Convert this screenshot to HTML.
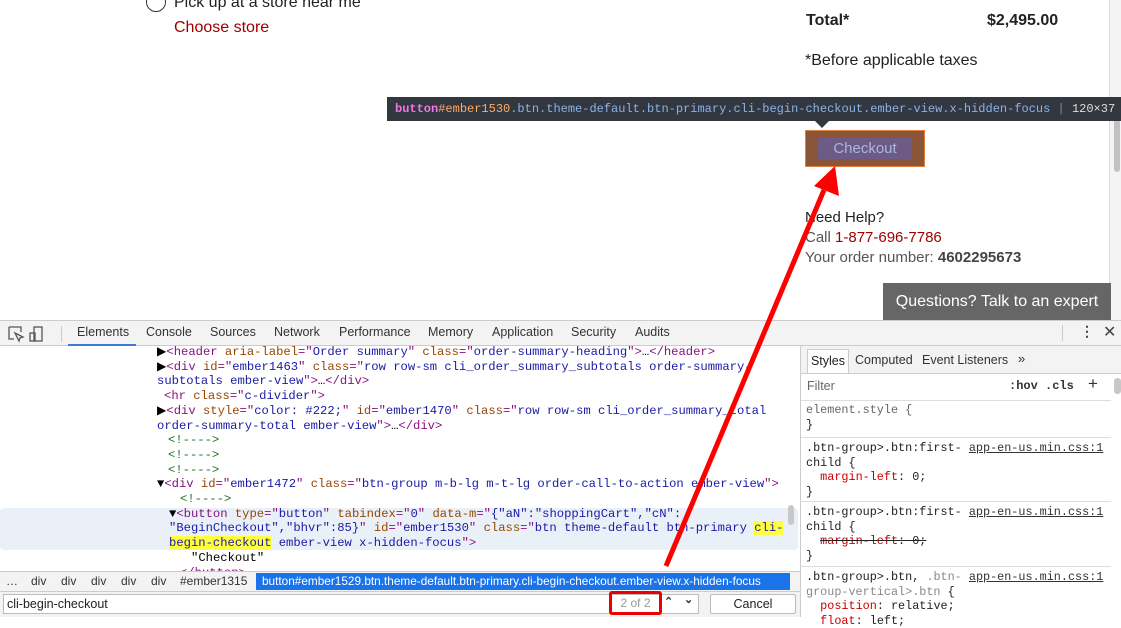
<!DOCTYPE html>
<html><head><meta charset="utf-8"><style>
*{margin:0;padding:0;box-sizing:border-box}
body{width:1121px;height:617px;overflow:hidden;position:relative;background:#fff;font-family:"Liberation Sans",sans-serif}
.a{position:absolute;white-space:nowrap}
.m{font-family:"Liberation Mono",monospace;font-size:12.2px}
.tg{color:#881280}.at{color:#994500}.av{color:#1a1aa6}.cm{color:#236e25}
.sp{font-family:"Liberation Mono",monospace;font-size:11.8px;line-height:14.6px;color:#222}
</style></head><body>
<!-- page -->
<div class="a" style="left:146px;top:-8px;width:20px;height:20px;border:1.5px solid #333;border-radius:50%"></div>
<div class="a" style="left:174px;top:-6px;font-size:16px;color:#222">Pick up at a store near me</div>
<div class="a" style="left:174px;top:19px;font-size:16px;color:#a00000">Choose store</div>
<div class="a" style="left:806px;top:12px;font-size:16px;font-weight:bold;color:#222">Total*</div>
<div class="a" style="left:987px;top:12px;font-size:16px;font-weight:bold;color:#222">$2,495.00</div>
<div class="a" style="left:805px;top:52px;font-size:16px;color:#222">*Before applicable taxes</div>
<div class="a" style="left:1109px;top:0;width:12px;height:320px;background:#f4f4f4;border-left:1px solid #ddd"></div>
<div class="a" style="left:1114px;top:118px;width:6px;height:54px;background:#c1c1c1;border-radius:3px"></div>
<!-- tooltip -->
<div class="a m" style="left:387px;top:97px;width:734px;height:24px;overflow:hidden;background:#333740;color:#8ab4e8;line-height:24px;padding-left:8px;font-size:12px"><span style="color:#ee78e6;font-weight:bold">button</span><span style="color:#ffab66">#ember1530</span>.btn.theme-default.btn-primary.cli-begin-checkout.ember-view.x-hidden-focus <span style="color:#888">|</span> <span style="color:#ddd">120×37</span></div>
<div class="a" style="left:815px;top:121px;width:0;height:0;border-left:7px solid transparent;border-right:7px solid transparent;border-top:7px solid #333740"></div>
<div class="a" style="left:805px;top:130px;width:120px;height:37px;background:#8b5537;border:1px solid #e08040"></div>
<div class="a" style="left:818px;top:138px;width:94px;height:21px;background:#6d5a85;color:#a8b8e0;font-size:15px;text-align:center;line-height:21px">Checkout</div>
<div class="a" style="left:805px;top:209px;font-size:15px;color:#222">Need Help?</div>
<div class="a" style="left:805px;top:229px;font-size:15px;color:#555">Call <span style="color:#a00000">1-877-696-7786</span></div>
<div class="a" style="left:805px;top:249px;font-size:15px;color:#555">Your order number: <b style="color:#444">4602295673</b></div>
<div class="a" style="left:883px;top:283px;width:228px;height:37px;background:#666;color:#fff;font-size:16px;line-height:37px;text-align:center">Questions? Talk to an expert</div>
<!-- devtools -->
<div class="a" style="left:0;top:320px;width:1121px;height:26px;background:#f3f3f3;border-top:1px solid #ccc;border-bottom:1px solid #ccc"></div>
<svg class="a" style="left:7px;top:325px" width="44" height="18"><path d="M2 2h12v5M2 2v12h5M8 8l8 4-3 1-1 3z" fill="none" stroke="#555" stroke-width="1.3"/><rect x="27" y="2" width="8" height="14" fill="none" stroke="#555" stroke-width="1.3"/><rect x="23" y="8" width="5" height="8" fill="none" stroke="#555" stroke-width="1.3"/></svg>
<div class="a" style="left:61px;top:326px;width:1px;height:16px;background:#ccc"></div>
<div class="a" style="top:325px;left:0;font-size:12.5px;color:#333;width:700px">
<span class="a" style="left:77px">Elements</span><span class="a" style="left:146px">Console</span><span class="a" style="left:210px">Sources</span><span class="a" style="left:274px">Network</span><span class="a" style="left:339px">Performance</span><span class="a" style="left:428px">Memory</span><span class="a" style="left:492px">Application</span><span class="a" style="left:571px">Security</span><span class="a" style="left:635px">Audits</span></div>
<div class="a" style="left:68px;top:344px;width:68px;height:2px;background:#3879d9"></div>
<div class="a" style="left:1062px;top:325px;width:1px;height:16px;background:#ccc"></div>
<div class="a" style="left:1080px;top:323px;font-size:14px;color:#444;font-weight:bold">⋮</div>
<div class="a" style="left:1103px;top:322px;font-size:16px;color:#444">✕</div>
<div class="a" style="left:0;top:508px;width:798px;height:42px;background:#eaf0f8;border-radius:4px"></div>
<div class="a m" style="left:0;top:345px;width:800px;line-height:14.7px">
<div class="a" style="left:157px;top:0">▶<span class="tg">&lt;header</span> <span class="at">aria-label</span><span class="tg">="</span><span class="av">Order summary</span><span class="tg">"</span> <span class="at">class</span><span class="tg">="</span><span class="av">order-summary-heading</span><span class="tg">"&gt;</span>…<span class="tg">&lt;/header&gt;</span></div>
<div class="a" style="left:157px;top:14.7px">▶<span class="tg">&lt;div</span> <span class="at">id</span><span class="tg">="</span><span class="av">ember1463</span><span class="tg">"</span> <span class="at">class</span><span class="tg">="</span><span class="av">row row-sm cli_order_summary_subtotals order-summary-</span></div>
<div class="a" style="left:157px;top:29.4px"><span class="av">subtotals ember-view</span><span class="tg">"&gt;</span>…<span class="tg">&lt;/div&gt;</span></div>
<div class="a" style="left:164px;top:44.1px"><span class="tg">&lt;hr</span> <span class="at">class</span><span class="tg">="</span><span class="av">c-divider</span><span class="tg">"&gt;</span></div>
<div class="a" style="left:157px;top:58.8px">▶<span class="tg">&lt;div</span> <span class="at">style</span><span class="tg">="</span><span class="av">color: #222;</span><span class="tg">"</span> <span class="at">id</span><span class="tg">="</span><span class="av">ember1470</span><span class="tg">"</span> <span class="at">class</span><span class="tg">="</span><span class="av">row row-sm cli_order_summary_total</span></div>
<div class="a" style="left:157px;top:73.5px"><span class="av">order-summary-total ember-view</span><span class="tg">"&gt;</span>…<span class="tg">&lt;/div&gt;</span></div>
<div class="a cm" style="left:168px;top:88.2px">&lt;!----&gt;</div>
<div class="a cm" style="left:168px;top:102.9px">&lt;!----&gt;</div>
<div class="a cm" style="left:168px;top:117.6px">&lt;!----&gt;</div>
<div class="a" style="left:157px;top:132.3px">▼<span class="tg">&lt;div</span> <span class="at">id</span><span class="tg">="</span><span class="av">ember1472</span><span class="tg">"</span> <span class="at">class</span><span class="tg">="</span><span class="av">btn-group m-b-lg m-t-lg order-call-to-action ember-view</span><span class="tg">"&gt;</span></div>
<div class="a cm" style="left:180px;top:147px">&lt;!----&gt;</div>
<div class="a" style="left:169px;top:161.7px">▼<span class="tg">&lt;button</span> <span class="at">type</span><span class="tg">="</span><span class="av">button</span><span class="tg">"</span> <span class="at">tabindex</span><span class="tg">="</span><span class="av">0</span><span class="tg">"</span> <span class="at">data-m</span><span class="tg">="</span><span class="av">{"aN":"shoppingCart","cN":</span></div>
<div class="a" style="left:169px;top:176.4px"><span class="av">"BeginCheckout","bhvr":85}</span><span class="tg">"</span> <span class="at">id</span><span class="tg">="</span><span class="av">ember1530</span><span class="tg">"</span> <span class="at">class</span><span class="tg">="</span><span class="av">btn theme-default btn-primary <span style="background:#ffff40">cli-</span></span></div>
<div class="a" style="left:169px;top:191.1px"><span class="av"><span style="background:#ffff40">begin-checkout</span> ember-view x-hidden-focus</span><span class="tg">"&gt;</span></div>
<div class="a" style="left:191px;top:205.8px">"Checkout"</div>
<div class="a tg" style="left:180px;top:220.5px">&lt;/button&gt;</div>
</div>
<div class="a" style="left:788px;top:505px;width:6px;height:20px;background:#c8c8c8;border-radius:3px"></div>
<div class="a" style="left:0;top:571px;width:800px;height:20px;background:#f3f3f3;border-top:1px solid #ccc;font-size:12px;color:#333;line-height:19px">
<span class="a" style="left:6px">…</span><span class="a" style="left:31px">div</span><span class="a" style="left:61px">div</span><span class="a" style="left:91px">div</span><span class="a" style="left:121px">div</span><span class="a" style="left:151px">div</span><span class="a" style="left:180px">#ember1315</span>
<span class="a" style="left:256px;top:1px;width:534px;height:17px;background:#1a73e8;color:#fff;line-height:17px;padding-left:6px;font-size:11.8px">button#ember1529.btn.theme-default.btn-primary.cli-begin-checkout.ember-view.x-hidden-focus</span></div>
<div class="a" style="left:0;top:591px;width:800px;height:26px;background:#f3f3f3;border-top:1px solid #ccc"></div>
<div class="a" style="left:3px;top:594px;width:696px;height:20px;background:#fff;border:1px solid #bbb;font-size:12.5px;line-height:18px;padding-left:3px;color:#222">cli-begin-checkout</div>
<div class="a" style="left:609px;top:591px;width:53px;height:24px;border:3px solid #e00;border-radius:3px;font-size:12px;color:#999;line-height:18px;text-align:center">2 of 2</div>
<div class="a" style="left:664px;top:595px;font-size:11px;color:#333;font-weight:bold">⌃</div>
<div class="a" style="left:684px;top:593px;font-size:11px;color:#333;font-weight:bold">⌄</div>
<div class="a" style="left:710px;top:594px;width:86px;height:20px;background:#fff;border:1px solid #bbb;border-radius:2px;font-size:12.5px;text-align:center;line-height:18px;color:#222">Cancel</div>
<!-- styles pane -->
<div class="a" style="left:800px;top:346px;width:1px;height:271px;background:#ccc"></div>
<div class="a" style="left:801px;top:346px;width:320px;height:28px;background:#f3f3f3;border-bottom:1px solid #ccc;font-size:12.5px;color:#333"></div>
<div class="a" style="left:807px;top:349px;width:42px;height:24px;background:#fff;border:1px solid #ccc;border-bottom:none;font-size:12.5px;line-height:22px;text-align:center;color:#222">Styles</div>
<div class="a" style="left:855px;top:353px;font-size:12.5px;color:#333">Computed</div>
<div class="a" style="left:922px;top:353px;font-size:12.5px;color:#333">Event Listeners</div>
<div class="a" style="left:1018px;top:351px;font-size:13px;color:#333">»</div>
<div class="a" style="left:807px;top:379px;font-size:12.5px;color:#666">Filter</div>
<div class="a" style="left:1009px;top:379px;font-family:'Liberation Mono',monospace;font-size:12px;font-weight:bold;color:#333">:hov .cls</div>
<div class="a" style="left:1088px;top:374px;font-size:17px;color:#333">+</div>
<div class="a" style="left:801px;top:400px;width:310px;height:1px;background:#ddd"></div>
<div class="a" style="left:1114px;top:378px;width:7px;height:16px;background:#c8c8c8;border-radius:3px"></div>
<div class="a sp" style="left:806px;top:403px">
<div style="color:#666">element.style {</div><div>}</div></div>
<div class="a" style="left:801px;top:437px;width:310px;height:1px;background:#ddd"></div>
<div class="a sp" style="left:806px;top:441px">
<div>.btn-group&gt;.btn:first- <u style="color:#333">app-en-us.min.css:1</u></div><div>child {</div><div>&nbsp;&nbsp;<span style="color:#c80000">margin-left</span>: 0;</div><div>}</div></div>
<div class="a" style="left:801px;top:501px;width:310px;height:1px;background:#ddd"></div>
<div class="a sp" style="left:806px;top:505px">
<div>.btn-group&gt;.btn:first- <u style="color:#333">app-en-us.min.css:1</u></div><div>child {</div><div>&nbsp;&nbsp;<s><span style="color:#c80000">margin-left</span>: 0;</s></div><div>}</div></div>
<div class="a" style="left:801px;top:566px;width:310px;height:1px;background:#ddd"></div>
<div class="a sp" style="left:806px;top:570px">
<div>.btn-group&gt;.btn, <span style="color:#888">.btn-</span> <u style="color:#333">app-en-us.min.css:1</u></div><div style="color:#888">group-vertical&gt;.btn <span style="color:#222">{</span></div><div>&nbsp;&nbsp;<span style="color:#c80000">position</span>: relative;</div><div>&nbsp;&nbsp;<span style="color:#c80000">float</span>: left;</div></div>
<!-- arrow -->
<svg class="a" style="left:0;top:0" width="1121" height="617"><line x1="666" y1="566" x2="824" y2="190" stroke="#f00" stroke-width="5"/><polygon points="835,166 839,196 814,186" fill="#f00"/></svg>
</body></html>
